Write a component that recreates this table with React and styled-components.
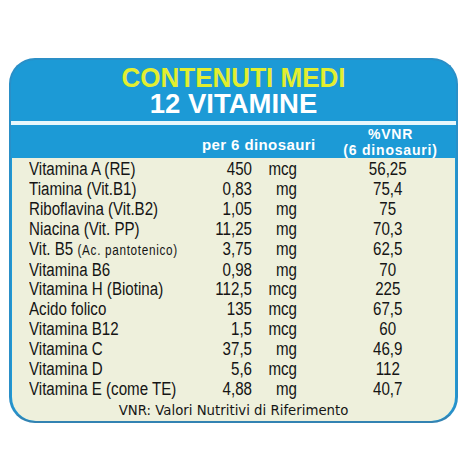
import React from 'react';
import styled, { createGlobalStyle } from 'styled-components';

const GlobalStyle = createGlobalStyle`
  body {
    margin: 0;
    background: #ffffff;
    font-family: 'Liberation Sans', Arial, sans-serif;
  }
`;

const Page = styled.div`
  width: 464px;
  height: 464px;
  padding: 58px 0 0 9px;
  box-sizing: border-box;
`;

const Panel = styled.div`
  width: 449px;
  box-sizing: border-box;
  background-color: #1c9ad6;
  border: 2px solid #2a8fc7;
  border-bottom-color: #3383b2;
  border-radius: 26px;
  overflow: hidden;
`;

const Title = styled.div`
  padding: 5px 0 4px 0;
  text-align: center;
  font-weight: bold;
`;

// condensed look: the label face is narrower than any installed font
const TitleLine = styled.div`
  font-size: ${(p) => p.size}px;
  line-height: 26px;
  color: ${(p) => p.color};
  transform: scaleX(${(p) => p.squeeze || 1});
`;

const Stripe = styled.div`
  height: 4px;
  background-color: #e6f7fc;
`;

const Grid = styled.div`
  display: grid;
  grid-template-columns: 171px 52px 45px 1fr;
  align-items: center;
`;

const HeadRow = styled(Grid)`
  height: 33px;
  padding-left: 18px;
  color: #ffffff;
  font-weight: bold;
  font-size: 15px;
  letter-spacing: 0.4px;
`;

const PerCell = styled.div`
  grid-column: 2 / 4;
  padding: 5px 0 0 2px;
  white-space: nowrap;
`;

const VnrHead = styled.div`
  grid-column: 4;
  padding: 1px 0 0 28px;
  text-align: center;
  font-size: 14px;
  letter-spacing: 0.8px;
  line-height: 16px;
  white-space: nowrap;
`;

const Body = styled.div`
  margin: 0 1px;
  padding: 2px 0 2px 17px;
  background-color: #eef0dc;
  border-radius: 0 0 24px 24px;
  color: #151515;
`;

const Row = styled(Grid)`
  font-size: 18px;
  line-height: 19.9px;
`;

const Cell = styled.div`
  white-space: nowrap;
  transform: scaleX(0.84);
  transform-origin: ${(p) => p.origin || 'left'} center;
  text-align: ${(p) => p.origin || 'left'};
`;

const Small = styled.span`
  font-size: 14px;
  letter-spacing: 0.8px;
`;

const VnrCell = styled(Cell)`
  padding-left: 28px;
`;

const Footer = styled.div`
  margin: 3px 0 0 -17px;
  text-align: center;
  font-family: 'DejaVu Sans', sans-serif;
  font-size: 13.3px;
  line-height: 16px;
  color: #151515;
`;

const rows = [
  ['Vitamina A (RE)', null, '450', 'mcg', '56,25'],
  ['Tiamina (Vit.B1)', null, '0,83', 'mg', '75,4'],
  ['Riboflavina (Vit.B2)', null, '1,05', 'mg', '75'],
  ['Niacina (Vit. PP)', null, '11,25', 'mg', '70,3'],
  ['Vit. B5 ', '(Ac. pantotenico)', '3,75', 'mg', '62,5'],
  ['Vitamina B6', null, '0,98', 'mg', '70'],
  ['Vitamina H (Biotina)', null, '112,5', 'mcg', '225'],
  ['Acido folico', null, '135', 'mcg', '67,5'],
  ['Vitamina B12', null, '1,5', 'mcg', '60'],
  ['Vitamina C', null, '37,5', 'mg', '46,9'],
  ['Vitamina D', null, '5,6', 'mcg', '112'],
  ['Vitamina E (come TE)', null, '4,88', 'mg', '40,7'],
];

export default function App() {
  return (
    <Page>
      <GlobalStyle />
      <Panel>
        <Title>
          <TitleLine size={28} color='#e2ee30' squeeze={0.93}>
            CONTENUTI MEDI
          </TitleLine>
          <TitleLine size={27.5} color='#ffffff'>
            12 VITAMINE
          </TitleLine>
        </Title>
        <Stripe />
        <HeadRow>
          <div />
          <PerCell>per 6 dinosauri</PerCell>
          <VnrHead>
            %VNR
            <br />
            (6 dinosauri)
          </VnrHead>
        </HeadRow>
        <Body>
          {rows.map(([name, note, amount, unit, vnr]) => (
            <Row key={name}>
              <Cell>
                {name}
                {note && <Small>{note}</Small>}
              </Cell>
              <Cell origin='right'>{amount}</Cell>
              <Cell origin='right'>{unit}</Cell>
              <VnrCell origin='center'>{vnr}</VnrCell>
            </Row>
          ))}
          <Footer>VNR: Valori Nutritivi di Riferimento</Footer>
        </Body>
      </Panel>
    </Page>
  );
}
